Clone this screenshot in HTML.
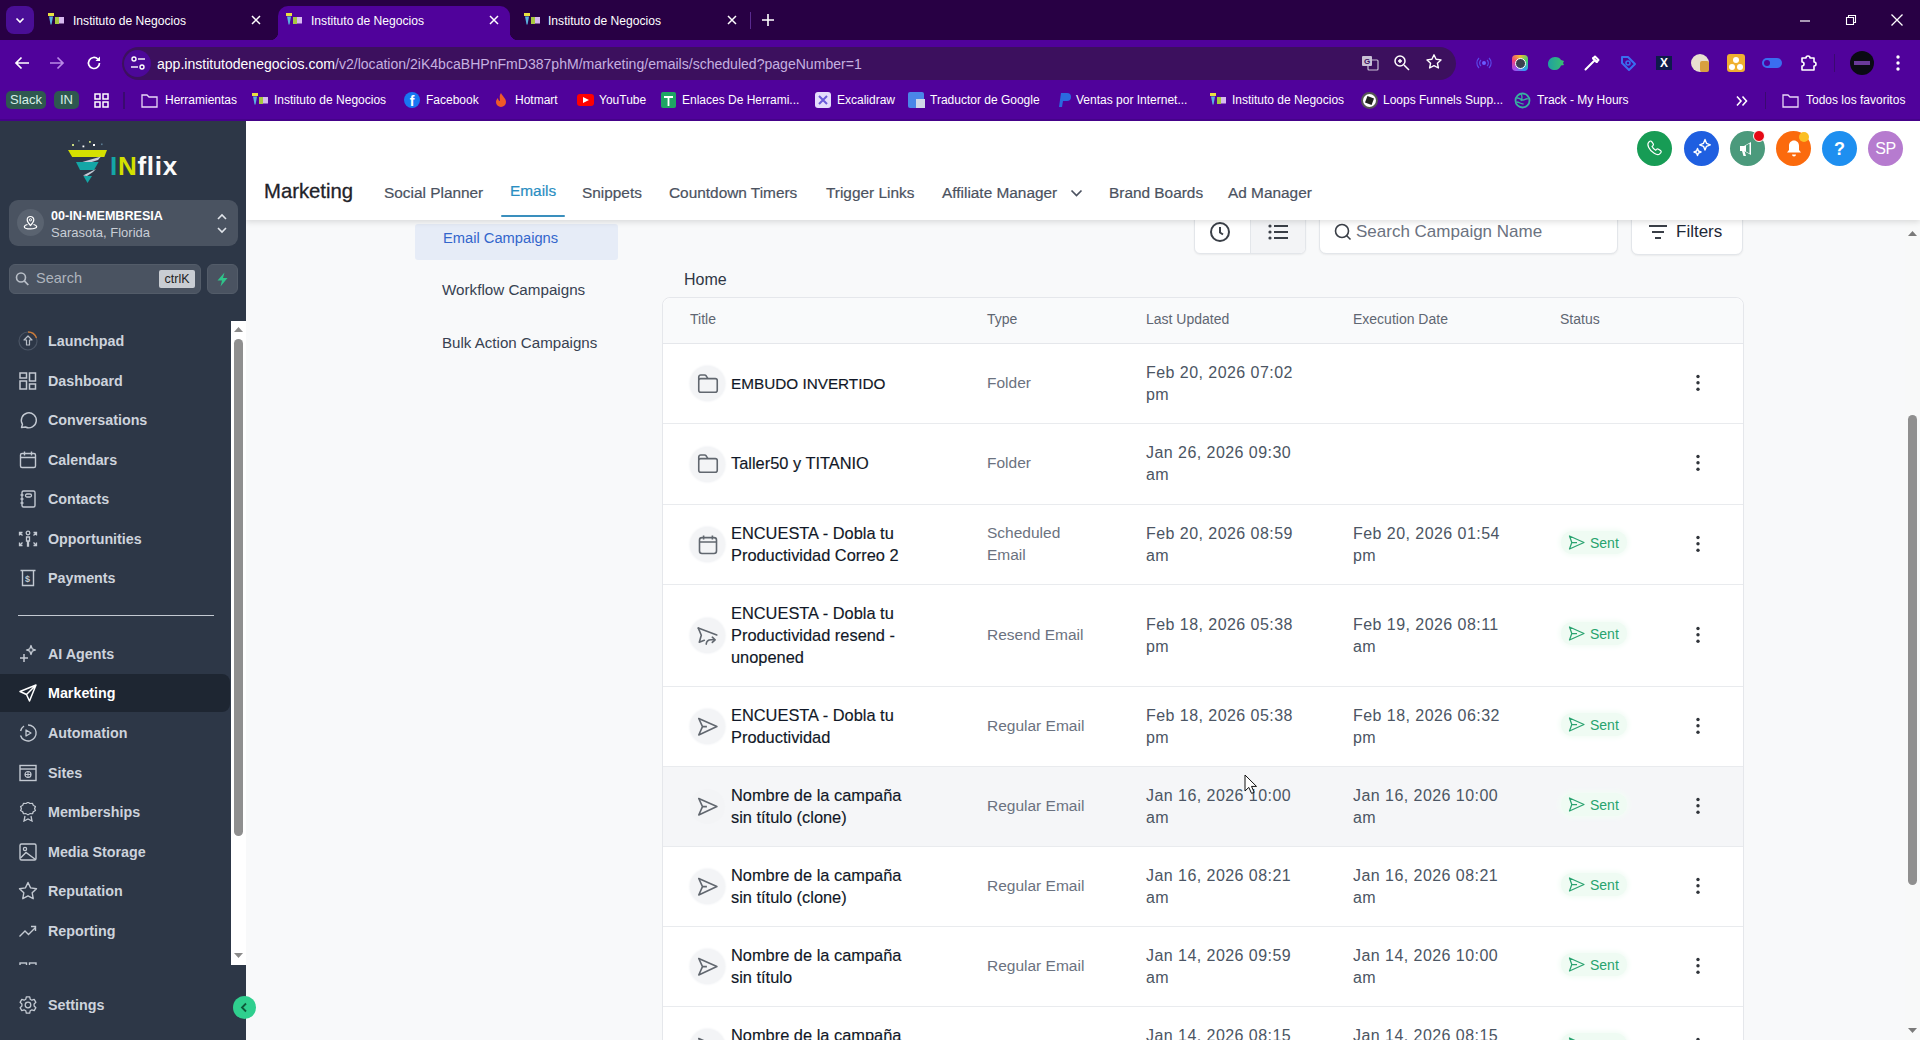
<!DOCTYPE html>
<html><head><meta charset="utf-8">
<style>
*{box-sizing:border-box;margin:0;padding:0}
html,body{width:1920px;height:1040px;overflow:hidden;font-family:"Liberation Sans",sans-serif;background:#f9fafb}
.a{position:absolute}
#tabs{left:0;top:0;width:1920px;height:40px;background:#280044}
#toolbar{left:0;top:40px;width:1920px;height:81px;background:#50029b}
#topline{left:0;top:120px;width:1920px;height:1px;background:#7a4ab0}
.ttl{font-size:12.1px;color:#fff;line-height:13px;white-space:nowrap}
.url{font-size:14.05px;line-height:15px;white-space:nowrap}
.bt{top:54px;font-size:12px;color:#fff;line-height:13px;white-space:nowrap}
.bk{font-size:13px}
#side{left:0;top:121px;width:246px;height:919px;background:#2d3747;overflow:visible}
.nav{left:18px;height:20px;display:flex;align-items:center;font-size:14.3px;font-weight:bold;color:#cdd3dc;white-space:nowrap}
.nav svg{flex:none;margin-right:10px}
#header{left:246px;top:121px;width:1674px;height:99px;background:#fff;box-shadow:0 2px 6px rgba(0,0,0,.13)}
.ht{top:64px;font-size:15.4px;color:#4b5260;line-height:15px;white-space:nowrap;-webkit-text-stroke:0.2px currentColor}
.circ{top:10px;width:35px;height:35px;border-radius:50%}
#content{left:246px;top:220px;width:1674px;height:820px;background:#f8f9fa}

#content svg{display:block}

</style></head>
<body>
<div id="content" class="a">
<div class="a" style="left:169px;top:4px;width:203px;height:36px;background:#e6ecf7;border-radius:3px"></div>
<div class="a" style="left:197px;top:11px;font-size:14.7px;line-height:15px;color:#3366cc;white-space:nowrap">Email Campaigns</div>
<div class="a" style="left:196px;top:62px;font-size:15.2px;line-height:15px;color:#374151;white-space:nowrap">Workflow Campaigns</div>
<div class="a" style="left:196px;top:115px;font-size:15.1px;line-height:15px;color:#374151;white-space:nowrap">Bulk Action Campaigns</div>
<div class="a" style="left:948px;top:-20px;width:112px;height:54px;background:#fff;border:1px solid #e3e6ea;border-radius:6px;box-shadow:0 1px 2px rgba(0,0,0,.06)"></div>
<div class="a" style="left:1004px;top:-19px;width:55px;height:52px;background:#f3f4f6;border-radius:0 5px 5px 0;border-left:1px solid #e3e6ea"></div>
<div class="a" style="left:961px;top:-2px;"><svg width="26" height="26" viewBox="0 0 26 26"><circle cx="13" cy="14" r="9" fill="none" stroke="#3a3f47" stroke-width="2"/><path d="M13 9v5.5l3 2" fill="none" stroke="#3a3f47" stroke-width="2"/></svg></div>
<div class="a" style="left:1020px;top:0px;"><svg width="24" height="24" viewBox="0 0 24 24"><circle cx="4" cy="6" r="1.6" fill="#3a3f47"/><circle cx="4" cy="12" r="1.6" fill="#3a3f47"/><circle cx="4" cy="18" r="1.6" fill="#3a3f47"/><path d="M8 6h14M8 12h14M8 18h14" stroke="#3a3f47" stroke-width="2"/></svg></div>
<div class="a" style="left:1073px;top:-20px;width:299px;height:54px;background:#fff;border:1px solid #e3e6ea;border-radius:7px;box-shadow:0 1px 2px rgba(0,0,0,.06)"></div>
<div class="a" style="left:1088px;top:3px;"><svg width="18" height="18" viewBox="0 0 18 18"><circle cx="8" cy="8" r="6.5" fill="none" stroke="#3a3f47" stroke-width="1.6"/><path d="M12.5 12.5l4 4" stroke="#3a3f47" stroke-width="1.6"/></svg></div>
<div class="a" style="left:1110px;top:3px;font-size:17px;line-height:17px;color:#6b7280;white-space:nowrap">Search Campaign Name</div>
<div class="a" style="left:1385px;top:-20px;width:112px;height:55px;background:#fff;border:1px solid #e3e6ea;border-radius:7px;box-shadow:0 1px 2px rgba(0,0,0,.06)"></div>
<div class="a" style="left:1402px;top:3px;"><svg width="20" height="18" viewBox="0 0 20 18"><path d="M1 3h18M4 9h12M7 15h6" stroke="#3a3f47" stroke-width="2"/></svg></div>
<div class="a" style="left:1430px;top:3px;font-size:17px;line-height:17px;color:#1f2937;white-space:nowrap">Filters</div>
<div class="a" style="left:438px;top:52px;font-size:16px;line-height:16px;color:#2f3744">Home</div>
<div class="a" style="left:416px;top:77px;width:1082px;height:760px;background:#fff;border:1px solid #e5e7eb;border-radius:8px;overflow:hidden"></div>
<div class="a" style="left:417px;top:78px;width:1080px;height:46px;background:#f9fafb;border-bottom:1px solid #e5e7eb;border-radius:8px 8px 0 0"></div>
<div class="a" style="left:444px;top:92px;font-size:14px;line-height:14px;color:#5f6672;white-space:nowrap">Title</div>
<div class="a" style="left:741px;top:92px;font-size:14px;line-height:14px;color:#5f6672;white-space:nowrap">Type</div>
<div class="a" style="left:900px;top:92px;font-size:14px;line-height:14px;color:#5f6672;white-space:nowrap">Last Updated</div>
<div class="a" style="left:1107px;top:92px;font-size:14px;line-height:14px;color:#5f6672;white-space:nowrap">Execution Date</div>
<div class="a" style="left:1314px;top:92px;font-size:14px;line-height:14px;color:#5f6672;white-space:nowrap">Status</div>
<div class="a" style="left:417px;top:203px;width:1080px;height:1px;background:#e9ebee"></div>
<div class="a" style="left:443.5px;top:146.0px;width:35px;height:35px;border-radius:50%;background:#f3f4f6;box-shadow:0 0 2px 1px #f5f6f8"></div>
<div class="a" style="left:449px;top:151.5px;"><svg width="24" height="24" viewBox="0 0 24 24"><rect x="3.75" y="6.6" width="18.5" height="13.6" rx="2" fill="none" stroke="#61676f" stroke-width="1.6"/><path d="M3.75 8V5a2 2 0 0 1 2-2h3.8a2 2 0 0 1 1.6.8l1.6 2.6" fill="none" stroke="#61676f" stroke-width="1.6" stroke-linejoin="round"/></svg></div>
<div class="a" style="left:485px;top:151.8px;line-height:22px;white-space:nowrap;font-size:16.4px;color:#111827;-webkit-text-stroke:0.15px currentColor"><span style="font-size:15.3px">EMBUDO INVERTIDO</span></div>
<div class="a" style="left:741px;top:151.8px;line-height:22px;white-space:nowrap;font-size:15.5px;color:#6b7280">Folder</div>
<div class="a" style="left:900px;top:141.8px;line-height:22px;white-space:nowrap;font-size:16px;letter-spacing:0.45px;color:#4b5563">Feb 20, 2026 07:02<br>pm</div>
<div class="a" style="left:1449px;top:153.5px;"><svg width="6" height="18" viewBox="0 0 6 18"><circle cx="3" cy="2.5" r="1.7" fill="#30343a"/><circle cx="3" cy="8.8" r="1.7" fill="#30343a"/><circle cx="3" cy="15.2" r="1.7" fill="#30343a"/></svg></div>
<div class="a" style="left:417px;top:284px;width:1080px;height:1px;background:#e9ebee"></div>
<div class="a" style="left:443.5px;top:226.5px;width:35px;height:35px;border-radius:50%;background:#f3f4f6;box-shadow:0 0 2px 1px #f5f6f8"></div>
<div class="a" style="left:449px;top:232.0px;"><svg width="24" height="24" viewBox="0 0 24 24"><rect x="3.75" y="6.6" width="18.5" height="13.6" rx="2" fill="none" stroke="#61676f" stroke-width="1.6"/><path d="M3.75 8V5a2 2 0 0 1 2-2h3.8a2 2 0 0 1 1.6.8l1.6 2.6" fill="none" stroke="#61676f" stroke-width="1.6" stroke-linejoin="round"/></svg></div>
<div class="a" style="left:485px;top:232.3px;line-height:22px;white-space:nowrap;font-size:16.4px;color:#111827;-webkit-text-stroke:0.15px currentColor">Taller50 y TITANIO</div>
<div class="a" style="left:741px;top:232.3px;line-height:22px;white-space:nowrap;font-size:15.5px;color:#6b7280">Folder</div>
<div class="a" style="left:900px;top:222.3px;line-height:22px;white-space:nowrap;font-size:16px;letter-spacing:0.45px;color:#4b5563">Jan 26, 2026 09:30<br>am</div>
<div class="a" style="left:1449px;top:234.0px;"><svg width="6" height="18" viewBox="0 0 6 18"><circle cx="3" cy="2.5" r="1.7" fill="#30343a"/><circle cx="3" cy="8.8" r="1.7" fill="#30343a"/><circle cx="3" cy="15.2" r="1.7" fill="#30343a"/></svg></div>
<div class="a" style="left:417px;top:364px;width:1080px;height:1px;background:#e9ebee"></div>
<div class="a" style="left:443.5px;top:307.0px;width:35px;height:35px;border-radius:50%;background:#f3f4f6;box-shadow:0 0 2px 1px #f5f6f8"></div>
<div class="a" style="left:449px;top:312.5px;"><svg width="24" height="24" viewBox="0 0 24 24"><rect x="4.5" y="4.6" width="17" height="15.9" rx="2.5" fill="none" stroke="#61676f" stroke-width="1.6"/><path d="M4.5 9h17M8.6 2.5v4M17.4 2.5v4" stroke="#61676f" stroke-width="1.6"/></svg></div>
<div class="a" style="left:485px;top:301.79999999999995px;line-height:22px;white-space:nowrap;font-size:16.4px;color:#111827;-webkit-text-stroke:0.15px currentColor">ENCUESTA - Dobla tu<br>Productividad Correo 2</div>
<div class="a" style="left:741px;top:301.79999999999995px;line-height:22px;white-space:nowrap;font-size:15.5px;color:#6b7280">Scheduled<br>Email</div>
<div class="a" style="left:900px;top:302.79999999999995px;line-height:22px;white-space:nowrap;font-size:16px;letter-spacing:0.45px;color:#4b5563">Feb 20, 2026 08:59<br>am</div>
<div class="a" style="left:1107px;top:302.79999999999995px;line-height:22px;white-space:nowrap;font-size:16px;letter-spacing:0.45px;color:#4b5563">Feb 20, 2026 01:54<br>pm</div>
<div class="a" style="left:1315px;top:311.0px;width:66px;height:23px;border-radius:12px;background:#effbf3;box-shadow:0 0 5px 2px #f3fcf6"></div>
<div class="a" style="left:1322px;top:315.0px;"><svg width="17" height="15" viewBox="0 0 17 15"><path d="M16 7.5 1.5 1l2.3 6.5L1.5 14z M3.8 7.5H9" fill="none" stroke="#2aa370" stroke-width="1.25" stroke-linejoin="round"/></svg></div>
<div class="a" style="left:1344px;top:315.5px;font-size:14px;line-height:14px;color:#27a36e">Sent</div>
<div class="a" style="left:1449px;top:314.5px;"><svg width="6" height="18" viewBox="0 0 6 18"><circle cx="3" cy="2.5" r="1.7" fill="#30343a"/><circle cx="3" cy="8.8" r="1.7" fill="#30343a"/><circle cx="3" cy="15.2" r="1.7" fill="#30343a"/></svg></div>
<div class="a" style="left:417px;top:466px;width:1080px;height:1px;background:#e9ebee"></div>
<div class="a" style="left:443.5px;top:398.0px;width:35px;height:35px;border-radius:50%;background:#f3f4f6;box-shadow:0 0 2px 1px #f5f6f8"></div>
<div class="a" style="left:449px;top:403.5px;"><svg width="24" height="24" viewBox="0 0 24 24"><path d="M3.3 4.1 21.8 10.9" fill="none" stroke="#61676f" stroke-width="1.6" stroke-linecap="round"/><path d="M3.3 4.1 6.3 11.2 4.3 18.2 9.3 16.3" fill="none" stroke="#61676f" stroke-width="1.6" stroke-linejoin="round" stroke-linecap="round"/><path d="M11.2 20.2c.3-2.6 2-4.4 4.8-4.4h3.6" fill="none" stroke="#61676f" stroke-width="1.6" stroke-linecap="round"/><path d="M17.3 13.2l2.8 2.6-2.8 2.6" fill="none" stroke="#61676f" stroke-width="1.6" stroke-linejoin="round" stroke-linecap="round"/></svg></div>
<div class="a" style="left:485px;top:381.79999999999995px;line-height:22px;white-space:nowrap;font-size:16.4px;color:#111827;-webkit-text-stroke:0.15px currentColor">ENCUESTA - Dobla tu<br>Productividad resend -<br>unopened</div>
<div class="a" style="left:741px;top:403.79999999999995px;line-height:22px;white-space:nowrap;font-size:15.5px;color:#6b7280">Resend Email</div>
<div class="a" style="left:900px;top:393.79999999999995px;line-height:22px;white-space:nowrap;font-size:16px;letter-spacing:0.45px;color:#4b5563">Feb 18, 2026 05:38<br>pm</div>
<div class="a" style="left:1107px;top:393.79999999999995px;line-height:22px;white-space:nowrap;font-size:16px;letter-spacing:0.45px;color:#4b5563">Feb 19, 2026 08:11<br>am</div>
<div class="a" style="left:1315px;top:402.0px;width:66px;height:23px;border-radius:12px;background:#effbf3;box-shadow:0 0 5px 2px #f3fcf6"></div>
<div class="a" style="left:1322px;top:406.0px;"><svg width="17" height="15" viewBox="0 0 17 15"><path d="M16 7.5 1.5 1l2.3 6.5L1.5 14z M3.8 7.5H9" fill="none" stroke="#2aa370" stroke-width="1.25" stroke-linejoin="round"/></svg></div>
<div class="a" style="left:1344px;top:406.5px;font-size:14px;line-height:14px;color:#27a36e">Sent</div>
<div class="a" style="left:1449px;top:405.5px;"><svg width="6" height="18" viewBox="0 0 6 18"><circle cx="3" cy="2.5" r="1.7" fill="#30343a"/><circle cx="3" cy="8.8" r="1.7" fill="#30343a"/><circle cx="3" cy="15.2" r="1.7" fill="#30343a"/></svg></div>
<div class="a" style="left:417px;top:546px;width:1080px;height:1px;background:#e9ebee"></div>
<div class="a" style="left:443.5px;top:489.0px;width:35px;height:35px;border-radius:50%;background:#f3f4f6;box-shadow:0 0 2px 1px #f5f6f8"></div>
<div class="a" style="left:449px;top:494.5px;"><svg width="24" height="24" viewBox="0 0 24 24"><path d="M3.75 3.5 21.9 11.6 3.75 20 7.5 11.6Z M7.5 11.6h4.4" fill="none" stroke="#61676f" stroke-width="1.6" stroke-linejoin="round"/></svg></div>
<div class="a" style="left:485px;top:483.79999999999995px;line-height:22px;white-space:nowrap;font-size:16.4px;color:#111827;-webkit-text-stroke:0.15px currentColor">ENCUESTA - Dobla tu<br>Productividad</div>
<div class="a" style="left:741px;top:494.79999999999995px;line-height:22px;white-space:nowrap;font-size:15.5px;color:#6b7280">Regular Email</div>
<div class="a" style="left:900px;top:484.79999999999995px;line-height:22px;white-space:nowrap;font-size:16px;letter-spacing:0.45px;color:#4b5563">Feb 18, 2026 05:38<br>pm</div>
<div class="a" style="left:1107px;top:484.79999999999995px;line-height:22px;white-space:nowrap;font-size:16px;letter-spacing:0.45px;color:#4b5563">Feb 18, 2026 06:32<br>pm</div>
<div class="a" style="left:1315px;top:493.0px;width:66px;height:23px;border-radius:12px;background:#effbf3;box-shadow:0 0 5px 2px #f3fcf6"></div>
<div class="a" style="left:1322px;top:497.0px;"><svg width="17" height="15" viewBox="0 0 17 15"><path d="M16 7.5 1.5 1l2.3 6.5L1.5 14z M3.8 7.5H9" fill="none" stroke="#2aa370" stroke-width="1.25" stroke-linejoin="round"/></svg></div>
<div class="a" style="left:1344px;top:497.5px;font-size:14px;line-height:14px;color:#27a36e">Sent</div>
<div class="a" style="left:1449px;top:496.5px;"><svg width="6" height="18" viewBox="0 0 6 18"><circle cx="3" cy="2.5" r="1.7" fill="#30343a"/><circle cx="3" cy="8.8" r="1.7" fill="#30343a"/><circle cx="3" cy="15.2" r="1.7" fill="#30343a"/></svg></div>
<div class="a" style="left:417px;top:547px;width:1080px;height:79px;background:#f5f6f8"></div>
<div class="a" style="left:417px;top:626px;width:1080px;height:1px;background:#e9ebee"></div>
<div class="a" style="left:443.5px;top:569.0px;width:35px;height:35px;border-radius:50%;background:#f3f4f6;box-shadow:0 0 2px 1px #f5f6f8"></div>
<div class="a" style="left:449px;top:574.5px;"><svg width="24" height="24" viewBox="0 0 24 24"><path d="M3.75 3.5 21.9 11.6 3.75 20 7.5 11.6Z M7.5 11.6h4.4" fill="none" stroke="#61676f" stroke-width="1.6" stroke-linejoin="round"/></svg></div>
<div class="a" style="left:485px;top:563.8px;line-height:22px;white-space:nowrap;font-size:16.4px;color:#111827;-webkit-text-stroke:0.15px currentColor">Nombre de la campaña<br>sin título (clone)</div>
<div class="a" style="left:741px;top:574.8px;line-height:22px;white-space:nowrap;font-size:15.5px;color:#6b7280">Regular Email</div>
<div class="a" style="left:900px;top:564.8px;line-height:22px;white-space:nowrap;font-size:16px;letter-spacing:0.45px;color:#4b5563">Jan 16, 2026 10:00<br>am</div>
<div class="a" style="left:1107px;top:564.8px;line-height:22px;white-space:nowrap;font-size:16px;letter-spacing:0.45px;color:#4b5563">Jan 16, 2026 10:00<br>am</div>
<div class="a" style="left:1315px;top:573.0px;width:66px;height:23px;border-radius:12px;background:#effbf3;box-shadow:0 0 5px 2px #f3fcf6"></div>
<div class="a" style="left:1322px;top:577.0px;"><svg width="17" height="15" viewBox="0 0 17 15"><path d="M16 7.5 1.5 1l2.3 6.5L1.5 14z M3.8 7.5H9" fill="none" stroke="#2aa370" stroke-width="1.25" stroke-linejoin="round"/></svg></div>
<div class="a" style="left:1344px;top:577.5px;font-size:14px;line-height:14px;color:#27a36e">Sent</div>
<div class="a" style="left:1449px;top:576.5px;"><svg width="6" height="18" viewBox="0 0 6 18"><circle cx="3" cy="2.5" r="1.7" fill="#30343a"/><circle cx="3" cy="8.8" r="1.7" fill="#30343a"/><circle cx="3" cy="15.2" r="1.7" fill="#30343a"/></svg></div>
<div class="a" style="left:417px;top:706px;width:1080px;height:1px;background:#e9ebee"></div>
<div class="a" style="left:443.5px;top:649.0px;width:35px;height:35px;border-radius:50%;background:#f3f4f6;box-shadow:0 0 2px 1px #f5f6f8"></div>
<div class="a" style="left:449px;top:654.5px;"><svg width="24" height="24" viewBox="0 0 24 24"><path d="M3.75 3.5 21.9 11.6 3.75 20 7.5 11.6Z M7.5 11.6h4.4" fill="none" stroke="#61676f" stroke-width="1.6" stroke-linejoin="round"/></svg></div>
<div class="a" style="left:485px;top:643.8px;line-height:22px;white-space:nowrap;font-size:16.4px;color:#111827;-webkit-text-stroke:0.15px currentColor">Nombre de la campaña<br>sin título (clone)</div>
<div class="a" style="left:741px;top:654.8px;line-height:22px;white-space:nowrap;font-size:15.5px;color:#6b7280">Regular Email</div>
<div class="a" style="left:900px;top:644.8px;line-height:22px;white-space:nowrap;font-size:16px;letter-spacing:0.45px;color:#4b5563">Jan 16, 2026 08:21<br>am</div>
<div class="a" style="left:1107px;top:644.8px;line-height:22px;white-space:nowrap;font-size:16px;letter-spacing:0.45px;color:#4b5563">Jan 16, 2026 08:21<br>am</div>
<div class="a" style="left:1315px;top:653.0px;width:66px;height:23px;border-radius:12px;background:#effbf3;box-shadow:0 0 5px 2px #f3fcf6"></div>
<div class="a" style="left:1322px;top:657.0px;"><svg width="17" height="15" viewBox="0 0 17 15"><path d="M16 7.5 1.5 1l2.3 6.5L1.5 14z M3.8 7.5H9" fill="none" stroke="#2aa370" stroke-width="1.25" stroke-linejoin="round"/></svg></div>
<div class="a" style="left:1344px;top:657.5px;font-size:14px;line-height:14px;color:#27a36e">Sent</div>
<div class="a" style="left:1449px;top:656.5px;"><svg width="6" height="18" viewBox="0 0 6 18"><circle cx="3" cy="2.5" r="1.7" fill="#30343a"/><circle cx="3" cy="8.8" r="1.7" fill="#30343a"/><circle cx="3" cy="15.2" r="1.7" fill="#30343a"/></svg></div>
<div class="a" style="left:417px;top:786px;width:1080px;height:1px;background:#e9ebee"></div>
<div class="a" style="left:443.5px;top:729.0px;width:35px;height:35px;border-radius:50%;background:#f3f4f6;box-shadow:0 0 2px 1px #f5f6f8"></div>
<div class="a" style="left:449px;top:734.5px;"><svg width="24" height="24" viewBox="0 0 24 24"><path d="M3.75 3.5 21.9 11.6 3.75 20 7.5 11.6Z M7.5 11.6h4.4" fill="none" stroke="#61676f" stroke-width="1.6" stroke-linejoin="round"/></svg></div>
<div class="a" style="left:485px;top:723.8px;line-height:22px;white-space:nowrap;font-size:16.4px;color:#111827;-webkit-text-stroke:0.15px currentColor">Nombre de la campaña<br>sin título</div>
<div class="a" style="left:741px;top:734.8px;line-height:22px;white-space:nowrap;font-size:15.5px;color:#6b7280">Regular Email</div>
<div class="a" style="left:900px;top:724.8px;line-height:22px;white-space:nowrap;font-size:16px;letter-spacing:0.45px;color:#4b5563">Jan 14, 2026 09:59<br>am</div>
<div class="a" style="left:1107px;top:724.8px;line-height:22px;white-space:nowrap;font-size:16px;letter-spacing:0.45px;color:#4b5563">Jan 14, 2026 10:00<br>am</div>
<div class="a" style="left:1315px;top:733.0px;width:66px;height:23px;border-radius:12px;background:#effbf3;box-shadow:0 0 5px 2px #f3fcf6"></div>
<div class="a" style="left:1322px;top:737.0px;"><svg width="17" height="15" viewBox="0 0 17 15"><path d="M16 7.5 1.5 1l2.3 6.5L1.5 14z M3.8 7.5H9" fill="none" stroke="#2aa370" stroke-width="1.25" stroke-linejoin="round"/></svg></div>
<div class="a" style="left:1344px;top:737.5px;font-size:14px;line-height:14px;color:#27a36e">Sent</div>
<div class="a" style="left:1449px;top:736.5px;"><svg width="6" height="18" viewBox="0 0 6 18"><circle cx="3" cy="2.5" r="1.7" fill="#30343a"/><circle cx="3" cy="8.8" r="1.7" fill="#30343a"/><circle cx="3" cy="15.2" r="1.7" fill="#30343a"/></svg></div>
<div class="a" style="left:417px;top:866px;width:1080px;height:1px;background:#e9ebee"></div>
<div class="a" style="left:443.5px;top:809.0px;width:35px;height:35px;border-radius:50%;background:#f3f4f6;box-shadow:0 0 2px 1px #f5f6f8"></div>
<div class="a" style="left:449px;top:814.5px;"><svg width="24" height="24" viewBox="0 0 24 24"><path d="M3.75 3.5 21.9 11.6 3.75 20 7.5 11.6Z M7.5 11.6h4.4" fill="none" stroke="#61676f" stroke-width="1.6" stroke-linejoin="round"/></svg></div>
<div class="a" style="left:485px;top:803.8px;line-height:22px;white-space:nowrap;font-size:16.4px;color:#111827;-webkit-text-stroke:0.15px currentColor">Nombre de la campaña<br>sin título</div>
<div class="a" style="left:741px;top:814.8px;line-height:22px;white-space:nowrap;font-size:15.5px;color:#6b7280">Regular Email</div>
<div class="a" style="left:900px;top:804.8px;line-height:22px;white-space:nowrap;font-size:16px;letter-spacing:0.45px;color:#4b5563">Jan 14, 2026 08:15<br>am</div>
<div class="a" style="left:1107px;top:804.8px;line-height:22px;white-space:nowrap;font-size:16px;letter-spacing:0.45px;color:#4b5563">Jan 14, 2026 08:15<br>am</div>
<div class="a" style="left:1315px;top:813.0px;width:66px;height:23px;border-radius:12px;background:#effbf3;box-shadow:0 0 5px 2px #f3fcf6"></div>
<div class="a" style="left:1322px;top:817.0px;"><svg width="17" height="15" viewBox="0 0 17 15"><path d="M16 7.5 1.5 1l2.3 6.5L1.5 14z M3.8 7.5H9" fill="none" stroke="#2aa370" stroke-width="1.25" stroke-linejoin="round"/></svg></div>
<div class="a" style="left:1344px;top:817.5px;font-size:14px;line-height:14px;color:#27a36e">Sent</div>
<div class="a" style="left:1449px;top:816.5px;"><svg width="6" height="18" viewBox="0 0 6 18"><circle cx="3" cy="2.5" r="1.7" fill="#30343a"/><circle cx="3" cy="8.8" r="1.7" fill="#30343a"/><circle cx="3" cy="15.2" r="1.7" fill="#30343a"/></svg></div>
<div class="a" style="left:1659px;top:0px;width:15px;height:820px;background:#f8f9f9"></div>
<div class="a" style="left:1661px;top:10px;"><svg width="11" height="7" viewBox="0 0 11 7"><path d="M1 6l4.5-5L10 6z" fill="#7a7a7a"/></svg></div>
<div class="a" style="left:1662px;top:195px;width:9px;height:470px;border-radius:5px;background:#8f8f8f"></div>
<div class="a" style="left:1661px;top:807px;"><svg width="11" height="7" viewBox="0 0 11 7"><path d="M1 1l4.5 5L10 1z" fill="#7a7a7a"/></svg></div>
<div class="a" style="left:997.5px;top:553.5px;"><svg width="13" height="20" viewBox="0 0 13 20"><path d="M1 1v16l3.8-3.6 2.8 6 2.6-1.1-2.7-5.9h5z" fill="#fff" stroke="#111" stroke-width="1" stroke-linejoin="round"/></svg></div>
</div>
<!-- HEADER -->
<div id="header" class="a">
  <div class="a" style="left:18px;top:60px;font-size:20.3px;color:#1f2329;-webkit-text-stroke:0.3px currentColor;line-height:20px;white-space:nowrap">Marketing</div>
  <div class="a ht" style="left:138px">Social Planner</div>
  <div class="a ht" style="left:264px;color:#2a8ec2;top:62px">Emails</div>
  <div class="a" style="left:255px;top:93.5px;width:64px;height:2.5px;background:#3a8fbd;border-radius:1px"></div>
  <div class="a ht" style="left:336px">Snippets</div>
  <div class="a ht" style="left:423px">Countdown Timers</div>
  <div class="a ht" style="left:580px">Trigger Links</div>
  <div class="a ht" style="left:696px">Affiliate Manager</div>
  <svg class="a" style="left:824px;top:68px" width="13" height="9" viewBox="0 0 13 9"><path d="M1.5 1.5 6.5 6.5 11.5 1.5" fill="none" stroke="#4b5260" stroke-width="1.7"/></svg>
  <div class="a ht" style="left:863px">Brand Boards</div>
  <div class="a ht" style="left:982px">Ad Manager</div>
  <!-- right icons -->
  <div class="a circ" style="left:1391px;background:#179c55"></div>
  <svg class="a" style="left:1400px;top:18px" width="18" height="18" viewBox="0 0 18 18"><path d="M3.5 2.5c.8-.8 1.6-.6 2.2.2l1.4 2c.5.7.4 1.5-.2 2l-.8.7c.7 1.6 2 3 3.6 3.8l.8-.8c.5-.6 1.3-.7 2-.2l2 1.4c.8.6 1 1.4.2 2.2l-1 1c-1 1-3 1-5.5-.6C5.5 12.6 3.6 10.5 2.6 8.2 1.6 5.8 1.8 4.2 2.6 3.4z" fill="none" stroke="#fff" stroke-width="1.2"/></svg>
  <div class="a circ" style="left:1438px;background:#1f5fe0"></div>
  <svg class="a" style="left:1445px;top:16px" width="22" height="22" viewBox="0 0 22 22"><path d="M14 2.5l1.5 3.8 3.8 1.5-3.8 1.5L14 13.1l-1.5-3.8L8.7 7.8l3.8-1.5z" fill="none" stroke="#fff" stroke-width="1.4" stroke-linejoin="round"/><path d="M6.5 11.5l1 2.5 2.5 1-2.5 1-1 2.5-1-2.5-2.5-1 2.5-1z" fill="none" stroke="#fff" stroke-width="1.4" stroke-linejoin="round"/></svg>
  <div class="a circ" style="left:1484px;background:#4b9a7c"></div>
  <svg class="a" style="left:1492px;top:19px" width="20" height="18" viewBox="0 0 20 18"><path d="M2 6h4l7-4v13l-7-4H2z" fill="#fff"/><path d="M4 11l1.5 5h2.5l-1.5-5z" fill="#fff"/><path d="M8 5.5l3.5-2v10l-3.5-2z" fill="#4b9a7c"/></svg>
  <div class="a" style="left:1507px;top:9px;width:12px;height:12px;border-radius:50%;background:#e50914;border:1px solid #fff"></div>
  <div class="a circ" style="left:1530px;background:#fb6a0d"></div>
  <svg class="a" style="left:1538px;top:17px" width="20" height="20" viewBox="0 0 20 20"><path d="M10 2.5c-3 0-5 2.3-5 5.3v4.2L3 14.5h14L15 12V7.8c0-3-2-5.3-5-5.3z" fill="#fff"/><path d="M8 16.5a2 2 0 0 0 4 0z" fill="#fff"/></svg>
  <div class="a" style="left:1553px;top:11px;width:10px;height:10px;border-radius:50%;background:#fbbf24"></div>
  <div class="a circ" style="left:1576px;background:#1e8ff0"></div>
  <div class="a" style="left:1576px;top:19px;width:35px;text-align:center;color:#fff;font-weight:bold;font-size:18px;line-height:18px">?</div>
  <div class="a circ" style="left:1622px;background:#b67bcf"></div>
  <div class="a" style="left:1622px;top:20px;width:35px;text-align:center;color:#fff;font-size:16px;line-height:16px;letter-spacing:-0.3px">SP</div>
</div>

<!-- SIDEBAR -->
<div id="side" class="a">
  <!-- logo -->
  <svg class="a" style="left:62px;top:15px" width="54" height="50" viewBox="62 136 54 50">
    <rect x="78" y="140" width="1.6" height="1.6" fill="#5a7a80"/><rect x="89" y="141" width="1.8" height="1.8" fill="#c8d880"/>
    <rect x="72" y="144" width="2" height="2" fill="#c8d880"/><rect x="82.5" y="145.5" width="1.8" height="1.8" fill="#fff"/>
    <rect x="93" y="144" width="2" height="2" fill="#fff"/><rect x="101" y="143.5" width="1.6" height="1.6" fill="#5a7a90"/>
    <path d="M68 150 L107 150 L104.3 157 L72.2 157 Z" fill="#d4e000"/>
    <path d="M79 163 L101 156.5 L98 160 L84 164.5 Z" fill="#c8ccd8"/>
    <path d="M76 162 L98.6 162 L94 170 L80 170 Z" fill="#14a6a6"/>
    <path d="M83 175.5 L96 169 L93 172 L87 176 Z" fill="#c8ccd8"/>
    <path d="M83.5 176 L92 176 L87.5 183 Z" fill="#14a6a6"/>
  </svg>
  <div class="a" style="left:110px;top:32px;font-size:26px;font-weight:bold;letter-spacing:0.7px;line-height:26px;white-space:nowrap"><span style="color:#14a6a6">I</span><span style="color:#d4e000">N</span><span style="color:#fafafa">flix</span></div>
  <!-- location -->
  <div class="a" style="left:9px;top:79px;width:229px;height:46px;border-radius:9px;background:#4a5361"></div>
  <div class="a" style="left:17px;top:88px;width:27px;height:27px;border-radius:50%;background:#5a6370"></div>
  <svg class="a" style="left:22px;top:93px" width="17" height="17" viewBox="0 0 17 17"><path d="M8.5 2.5a3.3 3.3 0 0 1 3.3 3.3c0 2.4-3.3 5.7-3.3 5.7S5.2 8.2 5.2 5.8A3.3 3.3 0 0 1 8.5 2.5z" fill="none" stroke="#fff" stroke-width="1.2"/><circle cx="8.5" cy="5.8" r="1.1" fill="none" stroke="#fff" stroke-width="1"/><path d="M5.5 10.5c-2 .5-3.2 1.3-3.2 2.2 0 1.3 2.8 2.2 6.2 2.2s6.2-1 6.2-2.2c0-.9-1.2-1.7-3.2-2.2" fill="none" stroke="#fff" stroke-width="1.2"/></svg>
  <div class="a" style="left:51px;top:89px;font-size:12.6px;font-weight:bold;color:#fff;line-height:13px;white-space:nowrap">00-IN-MEMBRESIA</div>
  <div class="a" style="left:51px;top:105px;font-size:13px;color:#c9ced6;line-height:13px;white-space:nowrap">Sarasota, Florida</div>
  <svg class="a" style="left:215px;top:92px" width="14" height="22" viewBox="0 0 14 22"><path d="M3 6l4-4 4 4M3 15l4 4 4-4" fill="none" stroke="#e0e4ea" stroke-width="1.6"/></svg>
  <!-- search -->
  <div class="a" style="left:9px;top:143px;width:192px;height:30px;border-radius:6px;background:#4a5361;border:1px solid #535c69"></div>
  <svg class="a" style="left:15px;top:150px" width="15" height="16" viewBox="0 0 15 16"><circle cx="6" cy="6.5" r="4.5" fill="none" stroke="#b8bec7" stroke-width="1.6"/><path d="M9.3 9.8l4 4.2" stroke="#b8bec7" stroke-width="1.7"/></svg>
  <div class="a" style="left:36px;top:150px;font-size:14.5px;color:#aeb4bd;line-height:15px">Search</div>
  <div class="a" style="left:159px;top:149px;width:36px;height:18px;border-radius:2px;background:#c9cdd3;color:#222;font-size:12.5px;line-height:18px;text-align:center">ctrlK</div>
  <div class="a" style="left:207px;top:143px;width:31px;height:30px;border-radius:6px;background:#4a5361;border:1px solid #535c69"></div>
  <svg class="a" style="left:215px;top:151px" width="15" height="15" viewBox="0 0 15 15"><path d="M9.5 0.5 L2.5 8.5 L7 8.5 L5.5 14.5 L12.5 6 L8 6 Z" fill="#2fc48a"/></svg>
  <!-- nav -->
  <div class="a nav" style="top:210px"><svg width="20" height="20" viewBox="0 0 20 20"><circle cx="10" cy="10" r="9" fill="none" stroke="#4a5464" stroke-width="1.2"/><path d="M10 1a9 9 0 0 1 8.5 6" fill="none" stroke="#c87a3a" stroke-width="1.3"/><path d="M10 5l-4 4h2.5v5h3V9H14z" fill="none" stroke="#b8bec7" stroke-width="1.2" stroke-linejoin="round"/></svg><span>Launchpad</span></div>
  <div class="a nav" style="top:250px"><svg width="20" height="20" viewBox="0 0 20 20"><rect x="2" y="2" width="6.5" height="5" fill="none" stroke="#c3c9d2" stroke-width="1.5"/><rect x="11.5" y="2" width="6" height="8" fill="none" stroke="#c3c9d2" stroke-width="1.5"/><rect x="2" y="10" width="6.5" height="8" fill="none" stroke="#c3c9d2" stroke-width="1.5"/><rect x="11.5" y="13" width="6" height="5" fill="none" stroke="#c3c9d2" stroke-width="1.5"/></svg><span>Dashboard</span></div>
  <div class="a nav" style="top:289px"><svg width="20" height="20" viewBox="0 0 20 20"><path d="M3.5 17.5l1-3.2A7.5 7.5 0 1 1 7.5 17l-4 .5z" fill="none" stroke="#c3c9d2" stroke-width="1.4" stroke-linejoin="round"/></svg><span>Conversations</span></div>
  <div class="a nav" style="top:329px"><svg width="20" height="20" viewBox="0 0 20 20"><rect x="2.5" y="3.5" width="15" height="14" rx="1.5" fill="none" stroke="#c3c9d2" stroke-width="1.4"/><path d="M2.5 7.5h15M6.5 1.5v4M13.5 1.5v4" stroke="#c3c9d2" stroke-width="1.4"/></svg><span>Calendars</span></div>
  <div class="a nav" style="top:368px"><svg width="20" height="20" viewBox="0 0 20 20"><rect x="4" y="2" width="13" height="16" rx="1.5" fill="none" stroke="#c3c9d2" stroke-width="1.4"/><rect x="7.5" y="5" width="6" height="3" rx="1.5" fill="none" stroke="#c3c9d2" stroke-width="1.3"/><path d="M2.5 6h3M2.5 10h3M2.5 14h3" stroke="#c3c9d2" stroke-width="1.3"/></svg><span>Contacts</span></div>
  <div class="a nav" style="top:408px"><svg width="20" height="20" viewBox="0 0 20 20"><circle cx="10" cy="4" r="1.8" fill="none" stroke="#c3c9d2" stroke-width="1.3"/><path d="M8.5 8h3v4h-1v5h-1v-5h-1z" fill="none" stroke="#c3c9d2" stroke-width="1.3"/><path d="M1.5 6.5V3.5h3M1.5 3.5l3 3M18.5 6.5V3.5h-3M18.5 3.5l-3 3M1.5 13.5v3h3M1.5 16.5l3-3M18.5 13.5v3h-3M18.5 16.5l-3-3" fill="none" stroke="#c3c9d2" stroke-width="1.3"/></svg><span>Opportunities</span></div>
  <div class="a nav" style="top:447px"><svg width="20" height="20" viewBox="0 0 20 20"><path d="M2.5 2.5h15M4.5 2.5v15h11v-15" fill="none" stroke="#c3c9d2" stroke-width="1.4"/><text x="7" y="14" font-size="9" font-family="Liberation Sans" font-weight="bold" fill="#c3c9d2">$</text></svg><span>Payments</span></div>
  <div class="a" style="left:18px;top:494px;width:196px;height:1px;background:#c3c9d2"></div>
  <div class="a nav" style="top:523px"><svg width="20" height="20" viewBox="0 0 20 20"><path d="M13 1.5l1.2 3.3 3.3 1.2-3.3 1.2L13 10.5l-1.2-3.3L8.5 6l3.3-1.2z" fill="none" stroke="#c3c9d2" stroke-width="1.3" stroke-linejoin="round"/><path d="M6 10v8M2 14h8" stroke="#c3c9d2" stroke-width="1.5"/></svg><span>AI Agents</span></div>
  <div class="a" style="left:0;top:553px;width:230px;height:38px;border-radius:0 8px 8px 0;background:#1e2632"></div>
  <div class="a nav" style="top:562px;color:#fff"><svg width="20" height="20" viewBox="0 0 20 20"><path d="M18 2L2 8.5l6.5 3L18 2l-6.5 16-3-6.5" fill="none" stroke="#fff" stroke-width="1.5" stroke-linejoin="round"/></svg><span>Marketing</span></div>
  <div class="a nav" style="top:602px"><svg width="20" height="20" viewBox="0 0 20 20"><path d="M10 2a8 8 0 1 1-7.5 10.5" fill="none" stroke="#c3c9d2" stroke-width="1.4"/><path d="M2.6 8A8 8 0 0 1 6 3" fill="none" stroke="#c3c9d2" stroke-width="1.4"/><path d="M8 7l5 3-5 3z" fill="none" stroke="#c3c9d2" stroke-width="1.3" stroke-linejoin="round"/></svg><span>Automation</span></div>
  <div class="a nav" style="top:642px"><svg width="20" height="20" viewBox="0 0 20 20"><rect x="2" y="2.5" width="16" height="15" fill="none" stroke="#c3c9d2" stroke-width="1.4"/><path d="M2 6h16" stroke="#c3c9d2" stroke-width="1.4"/><circle cx="10" cy="11.5" r="3" fill="none" stroke="#c3c9d2" stroke-width="1.2"/><path d="M7 11.5h6M10 8.5v6" stroke="#c3c9d2" stroke-width="1"/></svg><span>Sites</span></div>
  <div class="a nav" style="top:681px"><svg width="20" height="20" viewBox="0 0 20 20"><path d="M10 1.5l2 1.5 2.5-.2.8 2.3 2.1 1.4-.8 2.4.8 2.4-2.1 1.4-.8 2.3-2.5-.2-2 1.5-2-1.5-2.5.2-.8-2.3-2.1-1.4.8-2.4-.8-2.4 2.1-1.4.8-2.3 2.5.2z" fill="none" stroke="#c3c9d2" stroke-width="1.3" stroke-linejoin="round" transform="translate(0,-1) scale(1,0.85)"/><path d="M7 14l-1 5 4-2 4 2-1-5" fill="none" stroke="#c3c9d2" stroke-width="1.3"/></svg><span>Memberships</span></div>
  <div class="a nav" style="top:721px"><svg width="20" height="20" viewBox="0 0 20 20"><rect x="2" y="2" width="16" height="16" rx="1.5" fill="none" stroke="#c3c9d2" stroke-width="1.4"/><circle cx="7" cy="7" r="1.6" fill="none" stroke="#c3c9d2" stroke-width="1.3"/><path d="M2.5 16l5.5-5.5 9.5 7" fill="none" stroke="#c3c9d2" stroke-width="1.4"/></svg><span>Media Storage</span></div>
  <div class="a nav" style="top:760px"><svg width="20" height="20" viewBox="0 0 20 20"><path d="M10 1.5l2.6 5.4 5.9.8-4.3 4.1 1 5.9L10 14.9l-5.2 2.8 1-5.9L1.5 7.7l5.9-.8z" fill="none" stroke="#c3c9d2" stroke-width="1.4" stroke-linejoin="round"/></svg><span>Reputation</span></div>
  <div class="a nav" style="top:800px"><svg width="20" height="20" viewBox="0 0 20 20"><path d="M1.5 15.5l5.5-5.5 3.5 3.5 7-7M13 5.5h4.5V10" fill="none" stroke="#c3c9d2" stroke-width="1.4"/></svg><span>Reporting</span></div>
  <div class="a" style="left:0;top:839px;width:231px;height:5px;overflow:hidden">
    <div class="a nav" style="top:1px"><svg width="20" height="20" viewBox="0 0 20 20"><rect x="2" y="2" width="6.5" height="6.5" fill="none" stroke="#c3c9d2" stroke-width="1.4"/><rect x="11.5" y="2" width="6.5" height="6.5" fill="none" stroke="#c3c9d2" stroke-width="1.4"/></svg><span>App Marketplace</span></div>
  </div>
  <!-- sidebar scrollbar -->
  <div class="a" style="left:231px;top:200px;width:15px;height:644px;background:#fff"></div>
  <svg class="a" style="left:233px;top:205px" width="11" height="7" viewBox="0 0 11 7"><path d="M1 6l4.5-5L10 6z" fill="#8a8a8a"/></svg>
  <div class="a" style="left:234px;top:218px;width:9px;height:497px;border-radius:5px;background:#8f8f8f"></div>
  <svg class="a" style="left:233px;top:831px" width="11" height="7" viewBox="0 0 11 7"><path d="M1 1l4.5 5L10 1z" fill="#8a8a8a"/></svg>
  <div class="a nav" style="top:874px"><svg width="20" height="20" viewBox="0 0 20 20"><path d="M8.3 1.8h3.4l.5 2.4 1.7 1 2.3-.8 1.7 2.9-1.8 1.6v2.2l1.8 1.6-1.7 2.9-2.3-.8-1.7 1-.5 2.4H8.3l-.5-2.4-1.7-1-2.3.8-1.7-2.9 1.8-1.6V8.9L2.1 7.3l1.7-2.9 2.3.8 1.7-1z" fill="none" stroke="#c3c9d2" stroke-width="1.3" stroke-linejoin="round"/><circle cx="10" cy="10" r="2.8" fill="none" stroke="#c3c9d2" stroke-width="1.3"/></svg><span>Settings</span></div>
</div>
<div class="a" style="left:233px;top:996px;width:23px;height:23px;border-radius:50%;background:#2fcf8e"></div>
<svg class="a" style="left:238px;top:1001px" width="13" height="13" viewBox="0 0 13 13"><path d="M8 2.5 4 6.5l4 4" fill="none" stroke="#0e5a3a" stroke-width="1.8"/></svg>

<!-- CHROME -->
<div id="tabs" class="a">
  <div class="a" style="left:6px;top:6px;width:28px;height:28px;border-radius:8px;background:#4a0e96"></div>
  <svg class="a" style="left:12px;top:12px" width="16" height="16" viewBox="0 0 16 16"><path d="M4.5 6.5 8 10l3.5-3.5" fill="none" stroke="#fff" stroke-width="1.6"/></svg>
  <div class="a fav" style="left:48px;top:13px"><svg width="17" height="14" viewBox="0 0 17 14"><rect x="0" y="0" width="6" height="3" fill="#e8e040"/><path d="M1 3.5h4l-1.5 8h-1z" fill="#5ab0e0"/><rect x="7" y="4" width="4" height="7" fill="#a8c840"/><rect x="11" y="4" width="5" height="6.5" fill="#d8b8f0"/></svg></div>
  <div class="a ttl" style="left:73px;top:15px">Instituto de Negocios</div>
  <svg class="a" style="left:250px;top:14px" width="12" height="12" viewBox="0 0 12 12"><path d="M2 2l8 8M10 2l-8 8" stroke="#fff" stroke-width="1.5"/></svg>
  <div class="a" style="left:278px;top:6px;width:232px;height:34px;background:#50029b;border-radius:10px 10px 0 0"></div>
  <div class="a" style="left:270px;top:32px;width:8px;height:8px;background:radial-gradient(circle at 0 0,#280044 8px,#50029b 8.5px)"></div>
  <div class="a" style="left:510px;top:32px;width:8px;height:8px;background:radial-gradient(circle at 8px 0,#280044 8px,#50029b 8.5px)"></div>
  <div class="a fav" style="left:286px;top:13px"><svg width="17" height="14" viewBox="0 0 17 14"><rect x="0" y="0" width="6" height="3" fill="#e8e040"/><path d="M1 3.5h4l-1.5 8h-1z" fill="#5ab0e0"/><rect x="7" y="4" width="4" height="7" fill="#a8c840"/><rect x="11" y="4" width="5" height="6.5" fill="#d8b8f0"/></svg></div>
  <div class="a ttl" style="left:311px;top:15px">Instituto de Negocios</div>
  <svg class="a" style="left:488px;top:14px" width="12" height="12" viewBox="0 0 12 12"><path d="M2 2l8 8M10 2l-8 8" stroke="#fff" stroke-width="1.5"/></svg>
  <div class="a fav" style="left:524px;top:13px"><svg width="17" height="14" viewBox="0 0 17 14"><rect x="0" y="0" width="6" height="3" fill="#e8e040"/><path d="M1 3.5h4l-1.5 8h-1z" fill="#5ab0e0"/><rect x="7" y="4" width="4" height="7" fill="#a8c840"/><rect x="11" y="4" width="5" height="6.5" fill="#d8b8f0"/></svg></div>
  <div class="a ttl" style="left:548px;top:15px">Instituto de Negocios</div>
  <svg class="a" style="left:726px;top:14px" width="12" height="12" viewBox="0 0 12 12"><path d="M2 2l8 8M10 2l-8 8" stroke="#fff" stroke-width="1.5"/></svg>
  <div class="a" style="left:750px;top:12px;width:1px;height:17px;background:#5a2a90"></div>
  <svg class="a" style="left:761px;top:13px" width="14" height="14" viewBox="0 0 14 14"><path d="M7 1v12M1 7h12" stroke="#fff" stroke-width="1.6"/></svg>
  <svg class="a" style="left:1798px;top:14px" width="14" height="14" viewBox="0 0 14 14"><path d="M2 7h10" stroke="#fff" stroke-width="1.2"/></svg>
  <svg class="a" style="left:1844px;top:13px" width="14" height="14" viewBox="0 0 14 14"><path d="M2.5 4.5h7v7h-7z M4.5 4.5V2.5h7v7h-2" fill="none" stroke="#fff" stroke-width="1.1"/></svg>
  <svg class="a" style="left:1890px;top:13px" width="14" height="14" viewBox="0 0 14 14"><path d="M1.5 1.5l11 11M12.5 1.5l-11 11" stroke="#fff" stroke-width="1.3"/></svg>
</div>
<div id="toolbar" class="a">
  <div class="a" style="left:0;top:79px;width:1920px;height:1.5px;background:#45028a"></div>
  <svg class="a" style="left:13px;top:14px" width="18" height="18" viewBox="0 0 18 18"><path d="M16 9H3M8.5 3.5 3 9l5.5 5.5" fill="none" stroke="#fff" stroke-width="1.7"/></svg>
  <svg class="a" style="left:48px;top:14px" width="18" height="18" viewBox="0 0 18 18"><path d="M2 9h13M9.5 3.5 15 9l-5.5 5.5" fill="none" stroke="#b98ae6" stroke-width="1.7"/></svg>
  <svg class="a" style="left:85px;top:14px" width="18" height="18" viewBox="0 0 18 18"><path d="M14.5 9a5.5 5.5 0 1 1-1.6-3.9" fill="none" stroke="#fff" stroke-width="1.7"/><path d="M15 2.5v4.5h-4.5z" fill="#fff"/></svg>
  <div class="a" style="left:122px;top:7px;width:1334px;height:33px;border-radius:17px;background:#3c105e"></div>
  <div class="a" style="left:124px;top:10px;width:27px;height:27px;border-radius:50%;background:#4c0898"></div>
  <svg class="a" style="left:129px;top:14px" width="18" height="18" viewBox="0 0 18 18"><circle cx="5" cy="5" r="2" fill="none" stroke="#fff" stroke-width="1.4"/><path d="M9 5h7" stroke="#fff" stroke-width="1.4"/><circle cx="13" cy="13" r="2" fill="none" stroke="#fff" stroke-width="1.4"/><path d="M2 13h7" stroke="#fff" stroke-width="1.4"/></svg>
  <div class="a url" style="left:157px;top:16.5px"><span style="color:#fff">app.institutodenegocios.com</span><span style="color:#c6b0e0">/v2/location/2iK4bcaBHPnFmD387phM/marketing/emails/scheduled?pageNumber=1</span></div>
  <!-- translate -->
  <svg class="a" style="left:1361px;top:14px" width="18" height="18" viewBox="0 0 18 18"><rect x="1" y="2" width="10" height="10" rx="1" fill="#c9c0d6"/><rect x="7" y="6" width="10" height="10" rx="1" fill="none" stroke="#c9c0d6" stroke-width="1.2"/><text x="3" y="10" font-size="8" font-family="Liberation Sans" fill="#3c105e" font-weight="bold">G</text></svg>
  <svg class="a" style="left:1393px;top:14px" width="18" height="18" viewBox="0 0 18 18"><circle cx="7" cy="7" r="5" fill="none" stroke="#fff" stroke-width="1.5"/><path d="M11 11l5 5M5 7h4M7 5v4" stroke="#fff" stroke-width="1.5"/></svg>
  <svg class="a" style="left:1425px;top:13px" width="18" height="18" viewBox="0 0 18 18"><path d="M9 1.8l2.1 4.5 4.9.6-3.6 3.3 1 4.8L9 12.6l-4.4 2.4 1-4.8L2 6.9l4.9-.6z" fill="none" stroke="#fff" stroke-width="1.4" stroke-linejoin="round"/></svg>
  <!-- extensions -->
  <svg class="a" style="left:1476px;top:15px" width="16" height="16" viewBox="0 0 16 16"><circle cx="8" cy="8" r="2" fill="#6b5cff"/><path d="M5 5a4 4 0 0 0 0 6M11 5a4 4 0 0 1 0 6M3 3a7 7 0 0 0 0 10M13 3a7 7 0 0 1 0 10" fill="none" stroke="#5a48e8" stroke-width="1.2"/></svg>
  <div class="a" style="left:1512px;top:15px;width:16px;height:16px;border-radius:4px;background:conic-gradient(#f0c030,#40d070,#30a0f0,#a050f0,#f04080,#f0c030)"></div>
  <div class="a" style="left:1514.5px;top:17.5px;width:11px;height:11px;border-radius:50%;background:#3a4050;border:1.5px solid #fff"></div>
  <svg class="a" style="left:1547px;top:15px" width="18" height="16" viewBox="0 0 18 16"><defs><linearGradient id="dg" x1="0" x2="1"><stop offset="0" stop-color="#1fa0a0"/><stop offset="1" stop-color="#3ac070"/></linearGradient></defs><path d="M1 9c0-4 3-7 7-7 3 0 5 1 6 3l3 1-1 2 1 2-3 .5C13 13 11 15 8 15c-4 0-7-2-7-6z" fill="url(#dg)"/></svg>
  <svg class="a" style="left:1583px;top:14px" width="18" height="18" viewBox="0 0 18 18"><path d="M2.5 15.5l8.5-8.5M10 4l4 4M12 2.5l3.5 3.5-2 2-3.5-3.5z" fill="none" stroke="#fff" stroke-width="2" stroke-linecap="round" stroke-linejoin="round"/></svg>
  <svg class="a" style="left:1620px;top:15px" width="17" height="17" viewBox="0 0 17 17"><path d="M2 2h6l7 7-6 6-7-7z" fill="none" stroke="#3a6ef0" stroke-width="2" stroke-linejoin="round"/><circ cx="6" cy="6" r="1.5"/><circle cx="8" cy="8" r="2" fill="none" stroke="#3a6ef0" stroke-width="1.6"/></svg>
  <div class="a" style="left:1656px;top:16px;width:16px;height:14px;background:#0e1a4a;color:#fff;font-size:12px;font-weight:bold;text-align:center;line-height:14px">X</div>
  <div class="a" style="left:1691px;top:14px;width:18px;height:18px;border-radius:50%;background:#e8e0d0"></div>
  <div class="a" style="left:1700px;top:21px;width:9px;height:11px;border-radius:2px;background:#d8a040"></div>
  <div class="a" style="left:1727px;top:14px;width:18px;height:18px;border-radius:3px;background:#f0b030"></div>
  <div class="a" style="left:1733px;top:17px;width:6px;height:6px;border-radius:50%;background:#fff"></div>
  <div class="a" style="left:1729px;top:24px;width:6px;height:6px;border-radius:50%;background:#fff"></div>
  <div class="a" style="left:1737px;top:24px;width:6px;height:6px;border-radius:50%;background:#fff"></div>
  <div class="a" style="left:1762px;top:18px;width:20px;height:10px;border-radius:5px;background:#3a6ef0"></div>
  <div class="a" style="left:1764px;top:20px;width:6px;height:6px;border-radius:50%;background:#50029b"></div>
  <svg class="a" style="left:1799px;top:13px" width="20" height="20" viewBox="0 0 20 20"><path d="M3 5h4a2 2 0 0 1 4 0h4v4a2 2 0 0 1 0 4v4H3v-4a2 2 0 0 0 0-4z" fill="none" stroke="#fff" stroke-width="1.6" stroke-linejoin="round"/></svg>
  <div class="a" style="left:1834px;top:14px;width:1px;height:18px;background:#3a0a70"></div>
  <div class="a" style="left:1850px;top:11px;width:24px;height:24px;border-radius:50%;background:#0a0a14"></div>
  <div class="a" style="left:1854px;top:21px;width:16px;height:4px;background:#6a3a9a"></div>
  <svg class="a" style="left:1890px;top:13px" width="16" height="20" viewBox="0 0 16 20"><circle cx="8" cy="4" r="1.7" fill="#fff"/><circle cx="8" cy="10" r="1.7" fill="#fff"/><circle cx="8" cy="16" r="1.7" fill="#fff"/></svg>
  <!-- bookmarks -->
  <div class="a bk" style="left:6px;top:51px;width:40px;height:18px;border-radius:5px;background:#2e5850;color:#d8f0e8;text-align:center;line-height:18px">Slack</div>
  <div class="a bk" style="left:54px;top:51px;width:25px;height:18px;border-radius:5px;background:#2e5850;color:#d8f0e8;text-align:center;line-height:18px">IN</div>
  <svg class="a" style="left:94px;top:53px" width="15" height="15" viewBox="0 0 15 15"><rect x="1" y="1" width="5" height="5" fill="none" stroke="#fff" stroke-width="1.5"/><rect x="9" y="1" width="5" height="5" fill="none" stroke="#fff" stroke-width="1.5"/><rect x="1" y="9" width="5" height="5" fill="none" stroke="#fff" stroke-width="1.5"/><rect x="9" y="9" width="5" height="5" fill="none" stroke="#fff" stroke-width="1.5"/></svg>
  <div class="a" style="left:123px;top:52px;width:2px;height:17px;background:#3a0a70"></div>
  <svg class="a fold" style="left:141px;top:53px" width="17" height="15" viewBox="0 0 17 15"><path d="M1 2h5l2 2h8v10H1z" fill="none" stroke="#e8d8f8" stroke-width="1.3"/></svg>
  <div class="a bt" style="left:165px">Herramientas</div>
  <div class="a fav" style="left:252px;top:53px"><svg width="17" height="14" viewBox="0 0 17 14"><rect x="0" y="0" width="6" height="3" fill="#e8e040"/><path d="M1 3.5h4l-1.5 8h-1z" fill="#5ab0e0"/><rect x="7" y="4" width="4" height="7" fill="#a8c840"/><rect x="11" y="4" width="5" height="6.5" fill="#d8b8f0"/></svg></div>
  <div class="a bt" style="left:274px">Instituto de Negocios</div>
  <div class="a" style="left:404px;top:52px;width:16px;height:16px;border-radius:50%;background:#1877f2;color:#fff;font-weight:bold;font-size:14px;line-height:18px;text-align:center;overflow:hidden">f</div>
  <div class="a bt" style="left:426px">Facebook</div>
  <svg class="a" style="left:494px;top:52px" width="14" height="17" viewBox="0 0 14 17"><path d="M7 1c1 3 5 5 5 9a5 5 0 0 1-10 0c0-2 1-3 2-4 0 2 1 3 2 3 0-3-1-5 1-8z" fill="#f05a28"/></svg>
  <div class="a bt" style="left:515px">Hotmart</div>
  <div class="a" style="left:577px;top:54px;width:17px;height:12px;border-radius:3px;background:#ff0000"></div>
  <svg class="a" style="left:583px;top:57px" width="6" height="6" viewBox="0 0 6 6"><path d="M0 0l6 3-6 3z" fill="#fff"/></svg>
  <div class="a bt" style="left:599px">YouTube</div>
  <div class="a" style="left:661px;top:52px;width:15px;height:16px;border-radius:2px;background:#1fa463"></div>
  <svg class="a" style="left:661px;top:52px" width="15" height="16" viewBox="0 0 15 16"><path d="M3 5h9M7.5 5v9" stroke="#fff" stroke-width="1.8"/></svg>
  <div class="a bt" style="left:682px">Enlaces De Herrami...</div>
  <div class="a" style="left:815px;top:52px;width:16px;height:16px;border-radius:3px;background:#e4defc"></div>
  <svg class="a" style="left:815px;top:52px" width="16" height="16" viewBox="0 0 16 16"><path d="M4 4l8 8M12 4l-8 8" stroke="#6a5ad8" stroke-width="2"/></svg>
  <div class="a bt" style="left:837px">Excalidraw</div>
  <div class="a" style="left:908px;top:52px;width:16px;height:16px;border-radius:2px;background:#4a86e8"></div>
  <div class="a" style="left:916px;top:59px;width:9px;height:9px;background:#d0d8e8"></div>
  <div class="a bt" style="left:930px">Traductor de Google</div>
  <svg class="a" style="left:1057px;top:52px" width="14" height="16" viewBox="0 0 14 16"><path d="M4 1h6a3 3 0 0 1 0 8H6l-1 6H2z" fill="#2a6adf"/></svg>
  <div class="a bt" style="left:1076px">Ventas por Internet...</div>
  <div class="a fav" style="left:1210px;top:53px"><svg width="17" height="14" viewBox="0 0 17 14"><rect x="0" y="0" width="6" height="3" fill="#e8e040"/><path d="M1 3.5h4l-1.5 8h-1z" fill="#5ab0e0"/><rect x="7" y="4" width="4" height="7" fill="#a8c840"/><rect x="11" y="4" width="5" height="6.5" fill="#d8b8f0"/></svg></div>
  <div class="a bt" style="left:1232px">Instituto de Negocios</div>
  <div class="a" style="left:1361px;top:52px;width:17px;height:17px;border-radius:50%;background:#fff;border:2px solid #555"></div>
  <div class="a" style="left:1366px;top:57px;width:7px;height:7px;background:#222;transform:rotate(20deg)"></div>
  <div class="a bt" style="left:1383px">Loops Funnels Supp...</div>
  <svg class="a" style="left:1514px;top:52px" width="17" height="17" viewBox="0 0 17 17"><circle cx="8.5" cy="8.5" r="7" fill="none" stroke="#38b0a0" stroke-width="1.8"/><path d="M3 6c3 0 4 2 6 2s3-2 5-1M2.5 10c3 0 4 2 7 2M7 2c2 3 1 5 0 7" fill="none" stroke="#38b0a0" stroke-width="1.3"/></svg>
  <div class="a bt" style="left:1537px">Track - My Hours</div>
  <svg class="a" style="left:1735px;top:55px" width="14" height="12" viewBox="0 0 14 12"><path d="M2 1.5 6 6l-4 4.5M7.5 1.5 11.5 6l-4 4.5" fill="none" stroke="#fff" stroke-width="1.6"/></svg>
  <div class="a" style="left:1765px;top:52px;width:1px;height:17px;background:#3a0a70"></div>
  <svg class="a" style="left:1782px;top:53px" width="17" height="15" viewBox="0 0 17 15"><path d="M1 2h5l2 2h8v10H1z" fill="none" stroke="#e8d8f8" stroke-width="1.3"/></svg>
  <div class="a bt" style="left:1806px">Todos los favoritos</div>
</div>

</body></html>
